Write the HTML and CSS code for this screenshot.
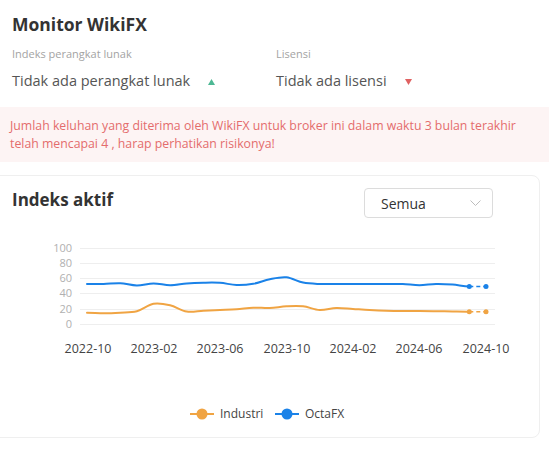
FILE: index.html
```html
<!DOCTYPE html>
<html lang="id">
<head>
<meta charset="utf-8">
<title>Monitor WikiFX</title>
<link rel="stylesheet" href="styles.css">
</head>
<body>
<section class="monitor">
  <h2 class="title">Monitor WikiFX</h2>
  <div class="stats">
    <div class="stat">
      <div class="label">Indeks perangkat lunak</div>
      <div class="value">Tidak ada perangkat lunak<svg class="tri" width="7" height="6" viewBox="0 0 7 6"><path d="M3.5 0 L7 6 L0 6 Z" fill="#4db894"/></svg></div>
    </div>
    <div class="stat">
      <div class="label">Lisensi</div>
      <div class="value">Tidak ada lisensi<svg class="tri" width="7" height="6" viewBox="0 0 7 6"><path d="M0 0 L7 0 L3.5 6 Z" fill="#e06262"/></svg></div>
    </div>
  </div>
</section>
<div class="alert">Jumlah keluhan yang diterima oleh WikiFX untuk broker ini dalam waktu 3 bulan terakhir telah mencapai 4 , harap perhatikan risikonya!</div>
<section class="card">
  <div class="card-head">
    <h3 class="card-title">Indeks aktif</h3>
    <div class="select"><span>Semua</span><svg width="11" height="6" viewBox="0 0 11 6"><path d="M0.5 0.5 L5.5 5.5 L10.5 0.5" fill="none" stroke="#bdbdbd" stroke-width="1"/></svg></div>
  </div>
  <svg class="chart" width="548" height="219" viewBox="-9 218 548 219">
    <g class="grid" stroke="#eeeeee" stroke-width="1">
      <line x1="80" y1="248.5" x2="495" y2="248.5"/>
      <line x1="80" y1="263.5" x2="495" y2="263.5"/>
      <line x1="80" y1="278.5" x2="495" y2="278.5"/>
      <line x1="80" y1="293.5" x2="495" y2="293.5"/>
      <line x1="80" y1="309.5" x2="495" y2="309.5"/>
      <line x1="80" y1="324.5" x2="495" y2="324.5"/>
    </g>
    <g class="ylab" text-anchor="end">
      <text x="72" y="251.5">100</text>
      <text x="72" y="266.5">80</text>
      <text x="72" y="281.5">60</text>
      <text x="72" y="296.5">40</text>
      <text x="72" y="312.5">20</text>
      <text x="72" y="327.5">0</text>
    </g>
    <g class="xlab" text-anchor="middle">
      <text x="88" y="353">2022-10</text>
      <text x="154" y="353">2023-02</text>
      <text x="220" y="353">2023-06</text>
      <text x="287" y="353">2023-10</text>
      <text x="353" y="353">2024-02</text>
      <text x="419" y="353">2024-06</text>
      <text x="486" y="353">2024-10</text>
    </g>
    <path class="ln blue" d="M87 284 C92.54 284 98.08 284.13 103.62 284 S114.7 282.95 120.24 283.2 S131.32 285.47 136.86 285.5 S147.94 283.45 153.48 283.4 S164.56 285.2 170.1 285.2 S181.18 283.82 186.72 283.4 S197.8 282.8 203.34 282.7 S214.42 282.42 219.96 282.8 S231.04 284.83 236.58 285 S247.66 284.77 253.2 283.8 S264.28 280.28 269.82 279.2 S280.9 276.73 286.44 277.3 S297.52 281.48 303.06 282.6 S314.14 283.77 319.68 284 S330.76 284 336.3 284 S347.38 284 352.92 284 S364 284 369.54 284 S380.62 284 386.16 284 S397.24 283.8 402.78 284 S413.86 285.2 419.4 285.2 S430.48 284.1 436.02 284 S447.1 284.18 452.64 284.6 S463.72 286.5 469.26 286.5"/>
    <line class="dash blue" x1="469.3" y1="286.5" x2="486" y2="286.5"/>
    <circle class="dot-b" cx="469.3" cy="286.5" r="2.5"/>
    <circle class="dot-b" cx="486" cy="286.5" r="2.5"/>
    <path class="ln orange" d="M87 312.7 C92.54 312.7 98.08 313.3 103.62 313.3 S114.7 313.03 120.24 312.7 S131.32 312.78 136.86 311.3 S147.94 304.8 153.48 303.8 S164.56 304 170.1 305.3 S181.18 310.7 186.72 311.6 S197.8 310.97 203.34 310.7 S214.42 310.23 219.96 310 S231.04 309.68 236.58 309.3 S247.66 307.92 253.2 307.7 S264.28 308.23 269.82 308 S280.9 306.58 286.44 306.3 S297.52 305.68 303.06 306.3 S314.14 309.72 319.68 310 S330.76 308.17 336.3 308 S347.38 308.67 352.92 309 S364 309.72 369.54 310 S380.62 310.53 386.16 310.7 S397.24 310.95 402.78 311 S413.86 310.97 419.4 311 S430.48 311.12 436.02 311.2 S447.1 311.42 452.64 311.5 S463.72 311.7 469.26 311.7"/>
    <line class="dash orange" x1="469.3" y1="311.7" x2="486" y2="311.7"/>
    <circle class="dot-o" cx="469.3" cy="311.7" r="2.5"/>
    <circle class="dot-o" cx="486" cy="311.7" r="2.5"/>
    <g class="legend">
      <line x1="190" y1="414" x2="214" y2="414" stroke="#f0a443" stroke-width="2"/>
      <circle cx="202" cy="414" r="5.5" fill="#f0a443"/>
      <text x="220" y="418">Industri</text>
      <line x1="275" y1="414" x2="299" y2="414" stroke="#1a82e8" stroke-width="2"/>
      <circle cx="287" cy="414" r="5.5" fill="#1a82e8"/>
      <text x="305" y="418">OctaFX</text>
    </g>
  </svg>
</section>
</body>
</html>
```
FILE: styles.css
```css
html, body {
  margin: 0;
  padding: 0;
  background: #ffffff;
}
body {
  font-family: "Open Sans", "Noto Sans", sans-serif;
  color: #333333;
  width: 549px;
  overflow: hidden;
}
.monitor {
  padding: 12px 12px 0 12px;
}
.title {
  margin: 0;
  font-size: 17.5px;
  line-height: 24px;
  font-weight: 700;
  color: #333333;
}
.stats {
  display: grid;
  grid-template-columns: 264px 1fr;
  margin-top: 9px;
}
.label {
  font-size: 11px;
  line-height: 18px;
  color: #a3a3a3;
}
.value {
  margin-top: 7px;
  font-size: 14.5px;
  line-height: 22px;
  color: #555555;
  display: flex;
  align-items: center;
}
.tri {
  margin-left: 18px;
  margin-top: 1px;
}
.alert {
  margin-top: 15px;
  background: #fdf4f4;
  color: #e46c6c;
  font-size: 12.3px;
  line-height: 18px;
  padding: 10px 20px 9px 10px;
}
.card {
  margin-top: 13px;
  margin-left: -10px;
  width: 550px;
  box-sizing: border-box;
  border: 1px solid #efefef;
  border-radius: 8px;
  padding-top: 12px;
}
.card-head {
  display: flex;
  justify-content: space-between;
  align-items: flex-start;
  height: 30px;
  padding: 0 46px 0 21px;
}
.card-title {
  margin: 0;
  font-size: 17px;
  line-height: 24px;
  font-weight: 700;
  color: #333333;
}
.select {
  box-sizing: border-box;
  width: 129px;
  height: 30px;
  border: 1px solid #dcdcdc;
  border-radius: 4px;
  display: flex;
  align-items: center;
  justify-content: space-between;
  padding: 0 11px 0 16px;
  font-size: 14px;
  color: #333333;
}
.chart {
  display: block;
}
.ylab text {
  font-size: 11px;
  fill: #b0b0b0;
}
.xlab text {
  font-size: 12.5px;
  fill: #444444;
}
.ln {
  fill: none;
  stroke-width: 2;
  stroke-linejoin: round;
  stroke-linecap: round;
}
.ln.blue { stroke: #1a82e8; }
.ln.orange { stroke: #f0a443; }
.dash {
  stroke-width: 1.5;
  stroke-dasharray: 4 3;
}
.dash.blue { stroke: #1a82e8; }
.dash.orange { stroke: #f0a443; }
.dot-b { fill: #1a82e8; }
.dot-o { fill: #f0a443; }
.legend text {
  font-size: 12px;
  fill: #444444;
}
```
